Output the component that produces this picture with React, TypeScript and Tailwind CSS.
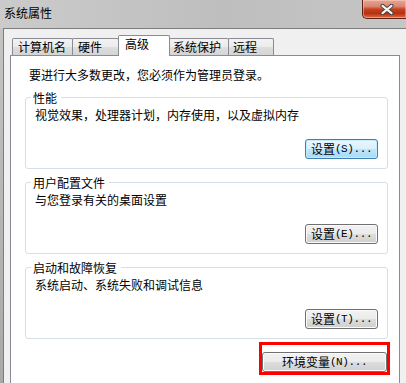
import type { ReactNode } from "react";

const TABS = [
  { label: "计算机名", w: "w-[61px]", pl: "pl-[5px]" },
  { label: "硬件", w: "w-[47px]", pl: "pl-[5px]" },
  { label: "高级", w: "w-[52px]", pl: "pl-[6px]", active: true },
  { label: "系统保护", w: "w-[60px]", pl: "pl-[3px]" },
  { label: "远程", w: "w-[46px]", pl: "pl-[4px]" },
];

const GROUPS = [
  { title: "性能", desc: "视觉效果，处理器计划，内存使用，以及虚拟内存", key: "S", focused: true },
  { title: "用户配置文件", desc: "与您登录有关的桌面设置", key: "E" },
  { title: "启动和故障恢复", desc: "系统启动、系统失败和调试信息", key: "T" },
];

function WinButton({ label, hotkey, focused, className = "" }: { label: string; hotkey: string; focused?: boolean; className?: string }) {
  return (
    <button
      className={`flex h-[20px] items-center justify-center rounded-[3px] border text-[12px] leading-[14px] text-black ${
        focused
          ? "border-[#3c7fb1] bg-[linear-gradient(180deg,#eaf6fd_0%,#d9f0fc_48%,#bee6fd_52%,#a7d9f5_100%)] shadow-[inset_0_0_0_1px_#c4ecfd]"
          : "border-[#707070] bg-[linear-gradient(180deg,#f2f2f2_0%,#ebebeb_48%,#dddddd_52%,#cfcfcf_100%)] shadow-[inset_0_0_0_1px_#fbfbfb]"
      } ${className}`}
    >
      {label}
      <span className="font-['Liberation_Mono',monospace] text-[11px] tracking-[-0.4px]">({hotkey})...</span>
    </button>
  );
}

function Group({ title, children }: { title: string; children: ReactNode }) {
  return (
    <fieldset className="mr-[11px] rounded-[3px] border border-[#d5dfe5] pb-[9px] pl-[5px] pr-[9px]">
      <legend className="pl-[2px] pr-[4px] leading-[13px]">{title}</legend>
      {children}
    </fieldset>
  );
}

function CloseButton() {
  return (
    <div className="flex h-[19px] w-[44px] items-center justify-center rounded-bl-[5px] border-b border-l border-[#5c2218] bg-[linear-gradient(180deg,#e7a594_0%,#d98772_35%,#c4411f_52%,#b7300f_75%,#dd7047_100%)] pl-[5px] shadow-[inset_0_0_0_1px_rgba(255,220,210,0.45)]">
      <svg width="14" height="11" viewBox="0 0 14 11">
        <path d="M2.5 1.8 L11.5 9.2 M11.5 1.8 L2.5 9.2" stroke="#3b3b3b" strokeWidth="4" strokeLinecap="round" fill="none" />
        <path d="M2.5 1.8 L11.5 9.2 M11.5 1.8 L2.5 9.2" stroke="#f4f4f4" strokeWidth="2.2" strokeLinecap="round" fill="none" />
      </svg>
    </div>
  );
}

export default function App() {
  return (
    <div className="flex h-[383px] w-[406px] flex-col overflow-hidden font-['Noto_Sans_CJK_SC',sans-serif] text-[12px] text-black">
      <div className="flex h-[28px] shrink-0 items-start justify-between bg-[linear-gradient(90deg,#cbcbcb_0%,#bebebe_55%,#c6c6c6_100%)]">
        <span className="pl-[4px] pt-[6px] text-[12px] leading-[14px]">系统属性</span>
        <CloseButton />
      </div>

      <div className="flex flex-1">
        <div className="w-[3px] bg-[linear-gradient(180deg,#c4c4c4,#a9a9a9)]" />
        <div className="flex flex-1 flex-col border-l border-t border-[#7d7d7d] bg-[#f0f0f0] pl-[6px] pt-[6px]">
          <div className="ml-[2px] flex h-[20px] items-end">
            {TABS.map((t, i) => (
              <div
                key={t.label}
                className={`${t.w} ${t.pl} ${i > 0 ? "-ml-px" : ""} rounded-t-[2px] border-l border-r border-t border-[#898c95] pt-[1px] leading-[14px] ${
                  t.active
                    ? "relative z-10 -mb-px h-[21px] bg-white"
                    : "h-[17px] bg-[linear-gradient(180deg,#f3f3f3_0%,#ebebeb_48%,#dedede_52%,#d4d4d4_100%)]"
                }`}
              >
                {t.label}
              </div>
            ))}
          </div>

          <div className="flex w-[390px] flex-1 flex-col border border-b-0 border-[#898c95] bg-white pl-[14px] pt-[12px]">
            <p className="ml-[4px] leading-[14px]">要进行大多数更改，您必须作为管理员登录。</p>

            <div className="mt-[9px] flex flex-col gap-[7px]">
              {GROUPS.map((g) => (
                <Group key={g.title} title={g.title}>
                  <p className="ml-[4px] mt-[4px] leading-[14px]">{g.desc}</p>
                  <div className="mt-[17px] flex justify-end">
                    <WinButton label="设置" hotkey={g.key} focused={g.focused} className="w-[73px]" />
                  </div>
                </Group>
              ))}
            </div>

            <div className="mt-[3px] flex justify-end pr-[9px]">
              <div className="w-[131px] border-[3px] border-[#ff0000] pt-[7px]">
                <WinButton label="环境变量" hotkey="N" className="w-full" />
              </div>
            </div>
          </div>
        </div>
      </div>
    </div>
  );
}
